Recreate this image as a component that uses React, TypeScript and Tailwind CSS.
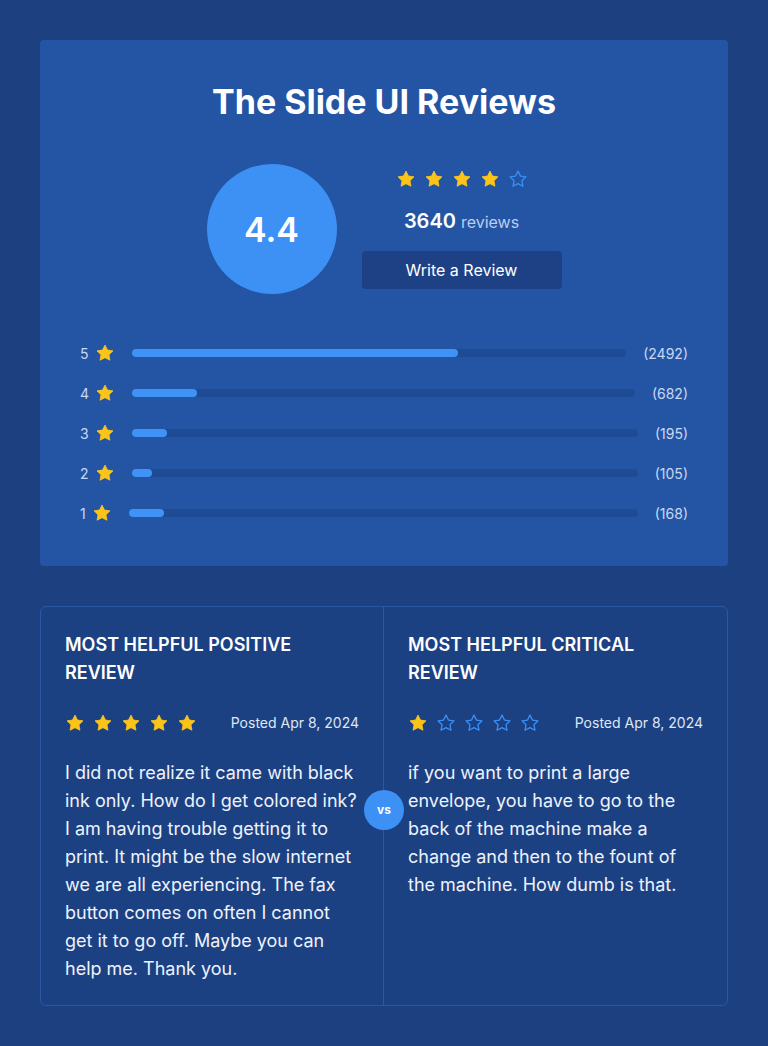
import React from 'react';

const STAR = 'M12 2.5l2.95 5.98 6.6.96-4.78 4.65 1.13 6.57L12 17.56l-5.9 3.1 1.13-6.57L2.45 9.44l6.6-.96L12 2.5z';

function Star({ filled, size = 20 }: { filled: boolean; size?: number }) {
  return (
    <svg width={size} height={size} viewBox="0 0 24 24" className="shrink-0">
      <path
        d={STAR}
        fill={filled ? '#fcc419' : 'none'}
        stroke={filled ? '#fcc419' : '#3b8ff5'}
        strokeWidth={filled ? 1 : 1.6}
        strokeLinejoin="round"
      />
    </svg>
  );
}

function Stars({ count }: { count: number }) {
  return (
    <div className="flex items-center gap-2">
      {[0, 1, 2, 3, 4].map((i) => (
        <Star key={i} filled={i < count} />
      ))}
    </div>
  );
}

const breakdown = [
  { stars: 5, count: 2492, pct: 66 },
  { stars: 4, count: 682, pct: 13 },
  { stars: 3, count: 195, pct: 7 },
  { stars: 2, count: 105, pct: 4 },
  { stars: 1, count: 168, pct: 7 },
];

const reviews = [
  {
    title: 'Most helpful positive review',
    rating: 5,
    date: 'Posted Apr 8, 2024',
    body: 'I did not realize it came with black ink only. How do I get colored ink? I am having trouble getting it to print. It might be the slow internet we are all experiencing. The fax button comes on often I cannot get it to go off. Maybe you can help me. Thank you.',
  },
  {
    title: 'Most helpful critical review',
    rating: 1,
    date: 'Posted Apr 8, 2024',
    body: 'if you want to print a large envelope, you have to go to the back of the machine make a change and then to the fount of the machine. How dumb is that.',
  },
];

export default function App() {
  return (
    <div className="min-h-[1046px] bg-[#1d4081] px-10 pt-10 pb-10 font-['Inter',sans-serif] text-white">
      {/* summary card */}
      <div className="rounded-[4px] bg-[#2455a5] px-10 pt-[42px] pb-[41px]">
        <h1 className="text-center text-[34px] leading-10 font-bold">The Slide UI Reviews</h1>

        <div className="mt-[42px] flex items-center justify-center gap-[25px]">
          <div className="flex h-[130px] w-[130px] items-center justify-center rounded-full bg-[#3d90f4]">
            <span className="text-[34px] font-semibold">4.4</span>
          </div>
          <div className="flex w-[200px] flex-col items-center">
            <Stars count={4} />
            <div className="mt-[18px] flex items-baseline gap-[5px] leading-7">
              <span className="text-[20px] font-semibold">3640</span>
              <span className="text-[16px] text-[#b9cdf0]">reviews</span>
            </div>
            <button className="mt-[15px] h-[38px] w-[200px] rounded-[4px] bg-[#1e4186] text-[16px]">
              Write a Review
            </button>
          </div>
        </div>

        <div className="mt-[47px] flex flex-col gap-4">
          {breakdown.map((row) => (
            <div key={row.stars} className="flex h-6 items-center">
              <span className="text-[14px] text-[#c8d8f3]">{row.stars}</span>
              <span className="ml-[6px]">
                <Star filled size={20} />
              </span>
              <div className="ml-[17px] h-2 flex-1 rounded-full bg-[#1f4a94]">
                <div className="h-2 rounded-full bg-[#3f92f6]" style={{ width: `${row.pct}%` }} />
              </div>
              <span className="ml-[17px] text-[14px] text-[#c8d8f3]">({row.count})</span>
            </div>
          ))}
        </div>
      </div>

      {/* helpful reviews */}
      <div className="relative mt-10 grid grid-cols-2 rounded-[6px] border border-[#2b57a3] bg-[#1c4183]">
        {reviews.map((r, i) => (
          <div key={r.title} className={`px-6 pt-6 pb-[22px] ${i === 0 ? 'border-r border-[#2b57a3]' : ''}`}>
            <h2 className="text-[18px] leading-7 font-semibold uppercase">{r.title}</h2>
            <div className="mt-[25px] flex items-center justify-between">
              <Stars count={r.rating} />
              <span className="text-[14px] text-[#dfe7f6]">{r.date}</span>
            </div>
            <p className="mt-[26px] text-[18px] leading-7 text-[#eef2fb]">{r.body}</p>
          </div>
        ))}
        <div className="absolute top-[183px] left-1/2 flex h-10 w-10 -translate-x-1/2 items-center justify-center rounded-full bg-[#3d90f4] text-[12px] font-bold">
          vs
        </div>
      </div>
    </div>
  );
}
